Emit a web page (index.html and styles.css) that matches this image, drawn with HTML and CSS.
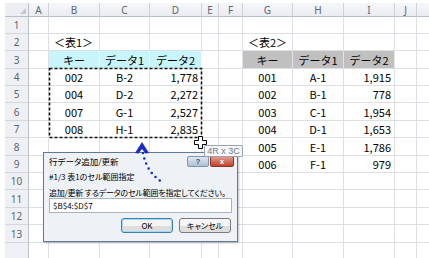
FILE: index.html
```html
<!DOCTYPE html>
<html>
<head>
  <meta charset="utf-8">
  <title>行データ追加/更新</title>
  <link rel="stylesheet" href="styles.css">
</head>
<body>
  <div class="workbook">
    <div class="sheet" id="sheet">
      <!-- セルは JavaScript で追加 -->
    </div>

    <!-- ダイアログ -->
    <div class="dialog">
      <div class="dialog-title">
        <span>行データ追加/更新</span>
        <div class="title-buttons">
          <span class="btn-help">?</span>
          <span class="btn-close">x</span>
        </div>
      </div>
      <div class="dialog-body">
        <div class="step">#1/3 表1のセル範囲指定</div>
        <div class="prompt">追加/更新 するデータのセル範囲を指定してください。</div>
        <div class="ref-box">$B$4:$D$7</div>
        <div class="dialog-actions">
          <button class="btn btn-default">OK</button>
          <button class="btn">キャンセル</button>
        </div>
      </div>
    </div>

    <!-- 選択範囲の点線と矢印 -->
    <svg class="overlay" width="429" height="258" viewBox="0 0 429 258">
      <rect x="49.5" y="68.5" width="152" height="69" fill="none" stroke="#111" stroke-width="1.6" stroke-dasharray="3 2"/>
      <path d="M198.5 136.5h4v4h4v4h-4v4h-4v-4h-4v-4h4z" fill="#fff" stroke="#000"/>
      <path d="M143 153 Q147 174 164 183" fill="none" stroke="#1a2dc2" stroke-width="2.6" stroke-linecap="round" stroke-dasharray="0 5.5"/>
      <path d="M142 142 L149 153 L145.5 153.5 L142 149 L138.5 153.5 L135 153 Z" fill="#1a2dc2"/>
    </svg>

    <div class="size-tip">4R x 3C</div>
  </div>

  <script>
    const letters = ['', 'A', 'B', 'C', 'D', 'E', 'F', 'G', 'H', 'I', 'J', ''];
    const lastRow = 14;

    const tables = [
      {
        col: 2,
        label: '＜表1＞',
        head: 'head-cyan',
        rows: [
          ['002', 'B-2', '1,778'],
          ['004', 'D-2', '2,272'],
          ['007', 'G-1', '2,527'],
          ['008', 'H-1', '2,835']
        ]
      },
      {
        col: 7,
        label: '＜表2＞',
        head: 'head-gray',
        rows: [
          ['001', 'A-1', '1,915'],
          ['002', 'B-1', '778'],
          ['003', 'C-1', '1,954'],
          ['004', 'D-1', '1,653'],
          ['005', 'E-1', '1,786'],
          ['006', 'F-1', '979']
        ]
      }
    ];

    // セル内容をまとめる
    const content = {};
    tables.forEach(t => {
      content[`2-${t.col}`] = { text: t.label, align: 'left' };
      ['キー', 'データ1', 'データ2'].forEach((h, i) => {
        content[`3-${t.col + i}`] = { text: h, align: 'center', cls: t.head };
      });
      t.rows.forEach((row, r) => {
        row.forEach((v, i) => {
          content[`${4 + r}-${t.col + i}`] = { text: v, align: i === 2 ? 'right' : 'center' };
        });
      });
    });

    // シートを描画
    const sheet = document.getElementById('sheet');
    for (let r = 0; r <= lastRow; r++) {
      for (let c = 0; c < letters.length; c++) {
        const cell = document.createElement('div');
        if (r === 0 && c === 0) {
          cell.className = 'corner';
        } else if (r === 0) {
          cell.className = 'col-head';
          cell.textContent = letters[c];
        } else if (c === 0) {
          cell.className = 'row-head';
          cell.textContent = r < lastRow ? r : '';
        } else {
          cell.className = 'cell';
          const item = content[`${r}-${c}`];
          if (item) {
            cell.textContent = item.text;
            cell.classList.add(item.align);
            if (item.cls) cell.classList.add(item.cls);
          }
        }
        sheet.appendChild(cell);
      }
    }
  </script>
</body>
</html>
```

FILE: styles.css
```css
body {
  margin: 0;
  background: #fff;
  font-family: "Noto Sans CJK JP", sans-serif;
  color: #000;
}
.workbook {
  position: relative;
  width: 429px;
  height: 258px;
  overflow: hidden;
  padding: 3px 0 0 5px;
  box-sizing: border-box;
}
.sheet {
  display: grid;
  grid-template-columns: 24px 20px 51px 50px 52px 17px 24px 50px 51px 51px 22px 30px;
  grid-template-rows: 14px 17px 17px 18px 17px 17px 18px 17px 18px 17px 17px 18px 17px 18px 20px;
}
.sheet > div {
  box-sizing: border-box;
  display: flex;
  align-items: center;
  white-space: nowrap;
  overflow: hidden;
}
.corner {
  position: relative;
  background: #eceef2;
  border-right: 1px solid #b9bfc8;
  border-bottom: 1px solid #b9bfc8;
}
.corner::after {
  content: '';
  position: absolute;
  right: 2px;
  bottom: 2px;
  border-left: 6px solid transparent;
  border-bottom: 6px solid #c3c8cf;
}
.col-head {
  justify-content: center;
  background: linear-gradient(#f6f7f9, #e9ecf0);
  border-right: 1px solid #cdd2d9;
  border-bottom: 1px solid #b9bfc8;
  font-family: "Noto Sans", sans-serif;
  font-size: 10px;
  color: #5b6574;
}
.row-head {
  justify-content: center;
  background: #eef0f3;
  border-right: 1px solid #b9bfc8;
  border-bottom: 1px solid #d3d7dd;
  font-family: "Noto Sans", sans-serif;
  font-size: 10px;
  color: #5b6574;
}
.cell {
  border-right: 1px solid #dcdfe3;
  border-bottom: 1px solid #dcdfe3;
  font-size: 11px;
  padding: 0 3px;
}
.left {
  justify-content: flex-start;
  padding-left: 5px;
}
.center {
  justify-content: center;
}
.right {
  justify-content: flex-end;
}
.head-cyan {
  background: #c8f4fb;
  border-right-color: #f4fdff;
}
.head-gray {
  background: #c0c0c0;
  border-right-color: #e2e2e2;
}

.dialog {
  position: absolute;
  left: 43px;
  top: 152px;
  width: 195px;
  height: 90px;
  box-sizing: border-box;
  border: 1px solid #60799a;
  background: #eef1f5;
  padding: 0 5px;
  display: flex;
  flex-direction: column;
  box-shadow: 1px 1px 2px rgba(0,0,0,0.25);
  font-feature-settings: "palt";
}
.dialog-title {
  height: 16px;
  display: flex;
  align-items: center;
  justify-content: space-between;
  font-size: 8.5px;
}
.title-buttons {
  display: flex;
  gap: 1px;
  margin-right: -2px;
}
.btn-help,
.btn-close {
  height: 9px;
  border-radius: 2px;
  display: flex;
  align-items: center;
  justify-content: center;
  font-family: "Liberation Sans", sans-serif;
  font-size: 8px;
  font-weight: bold;
}
.btn-help {
  width: 20px;
  background: linear-gradient(#dde7f2, #aebfd4);
  border: 1px solid #8294ad;
  color: #3c4d66;
}
.btn-close {
  width: 22px;
  background: linear-gradient(#e39a8c, #c1402b);
  border: 1px solid #8b3526;
  color: #fff;
}
.dialog-body {
  display: flex;
  flex-direction: column;
  font-size: 8px;
}
.step {
  height: 14px;
  line-height: 14px;
  margin-top: 1px;
}
.prompt {
  height: 10px;
  line-height: 10px;
  margin-top: 4px;
  letter-spacing: -0.2px;
}
.ref-box {
  height: 15px;
  box-sizing: border-box;
  background: #fff;
  border: 1px solid #abb3bd;
  padding-left: 3px;
  font-size: 8px;
  line-height: 13px;
}
.dialog-actions {
  display: flex;
  justify-content: flex-end;
  gap: 6px;
  margin-top: 5px;
  padding-right: 1px;
}
.btn {
  width: 52px;
  height: 15px;
  padding: 0;
  border: 1px solid #7a7a7a;
  border-radius: 3px;
  background: linear-gradient(#f5f5f5 50%, #dedede 50%);
  font-family: "Noto Sans CJK JP", sans-serif;
  font-feature-settings: "palt";
  font-size: 8px;
  color: #000;
}
.btn-default {
  border-color: #3c7fb1;
  box-shadow: inset 0 0 0 1px #a8d8f0;
}

.overlay {
  position: absolute;
  left: 0;
  top: 0;
  pointer-events: none;
}
.size-tip {
  position: absolute;
  left: 204px;
  top: 145px;
  width: 39px;
  height: 12px;
  box-sizing: border-box;
  border: 1px solid #9aa3b0;
  border-radius: 2px;
  background: #f6f8fb;
  font-family: "Liberation Sans", sans-serif;
  font-size: 9px;
  line-height: 10px;
  text-align: center;
  color: #6d7a8f;
}
```
